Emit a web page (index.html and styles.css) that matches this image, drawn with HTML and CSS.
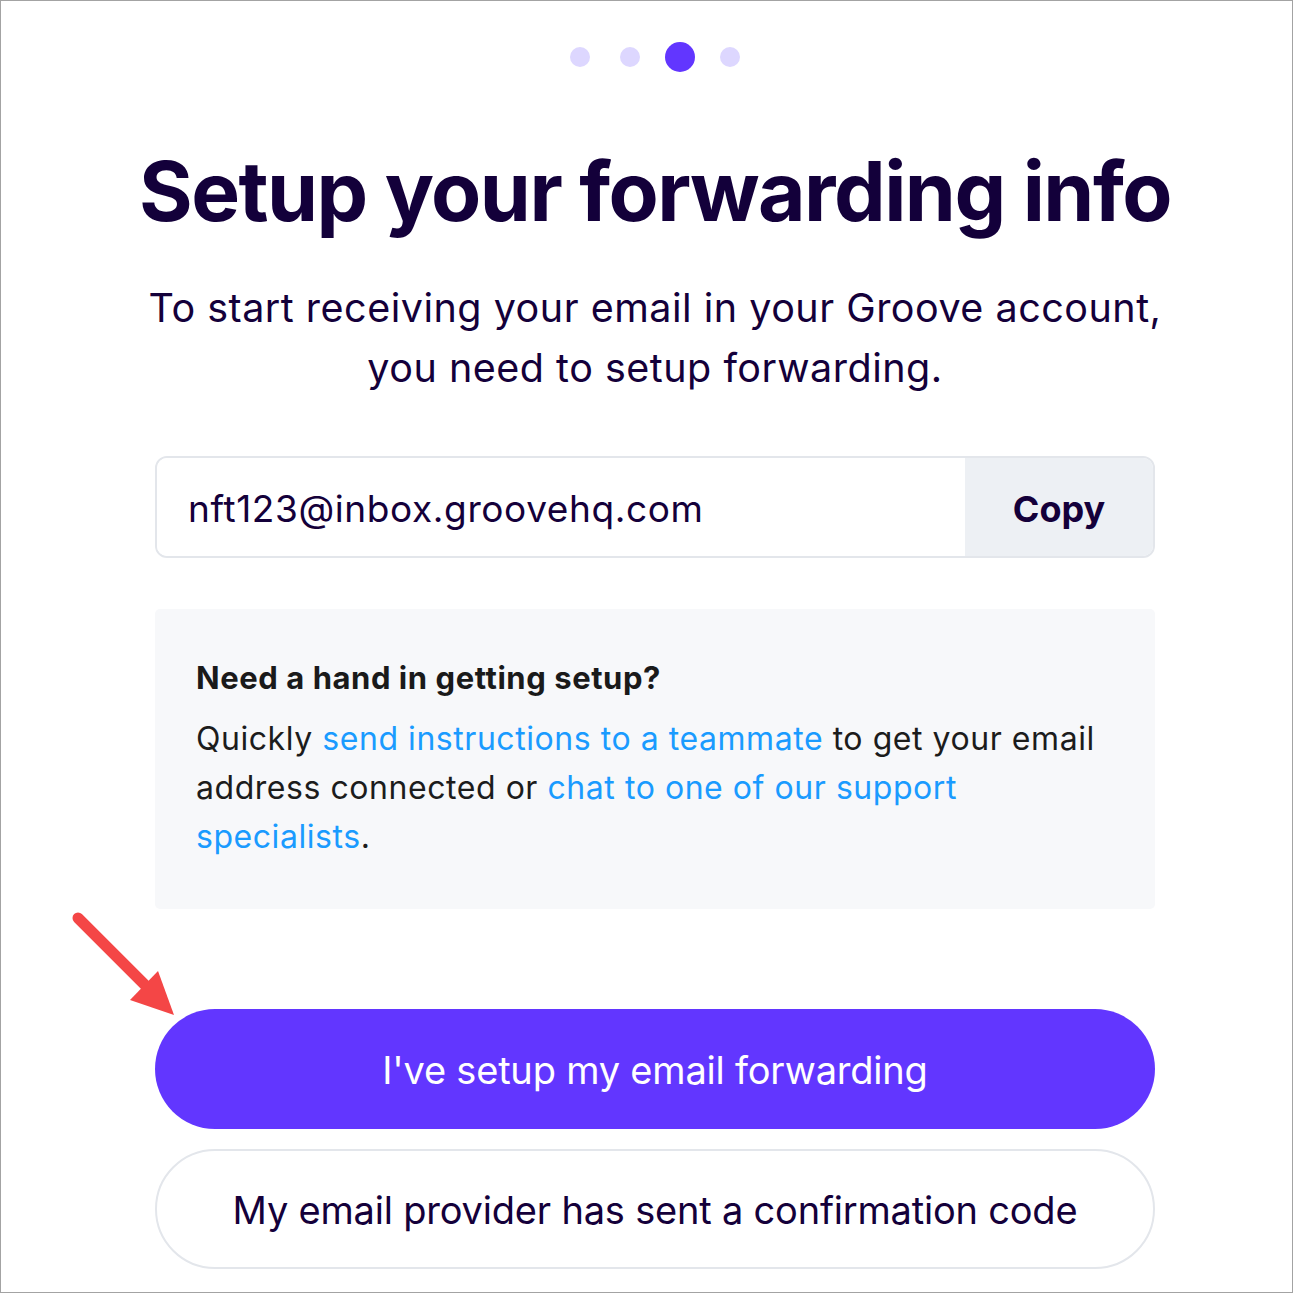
FILE: index.html
```html
<!DOCTYPE html>
<html lang="en">
<head>
<meta charset="utf-8">
<title>Setup your forwarding info</title>
<link rel="stylesheet" href="styles.css">
</head>
<body>
<div class="frame">
  <div class="column">
    <div class="steps">
      <span class="dot"></span>
      <span class="dot"></span>
      <span class="dot active"></span>
      <span class="dot"></span>
    </div>
    <h1 class="title">Setup your forwarding info</h1>
    <p class="subtitle">To start receiving your email in your Groove account,<br>you need to setup forwarding.</p>
    <div class="copy-field">
      <div class="email">nft123@inbox.groovehq.com</div>
      <button class="copy-btn">Copy</button>
    </div>
    <div class="help">
      <div class="help-title">Need a hand in getting setup?</div>
      <p class="help-text">Quickly <a href="#" class="link">send instructions to a teammate</a> to get your email address connected or <a href="#" class="link">chat to one of our support specialists</a>.</p>
    </div>
    <button class="btn-primary">I've setup my email forwarding</button>
    <button class="btn-secondary">My email provider has sent a confirmation code</button>
  </div>
  <svg class="arrow" width="130" height="130" viewBox="0 0 130 130">
    <line x1="18" y1="18" x2="86" y2="86" stroke="#f44646" stroke-width="11" stroke-linecap="round"/>
    <polygon points="70,100 98,71 114,115" fill="#f44646"/>
  </svg>
</div>
</body>
</html>
```
FILE: styles.css
```css
* { box-sizing: border-box; }
html, body { margin: 0; padding: 0; background: #fff; }
body { font-family: Inter, "Noto Sans", sans-serif; color: #14003a; }

.frame {
  position: relative;
  width: 1293px;
  height: 1293px;
  border: 1px solid #a3a3a3;
  padding: 41px 0 0 154px;
  overflow: hidden;
}

.column {
  width: 1000px;
  display: flex;
  flex-direction: column;
  align-items: stretch;
}

.steps {
  display: flex;
  justify-content: center;
  align-items: center;
  gap: 30px;
  height: 30px;
}
.dot {
  width: 20px;
  height: 20px;
  border-radius: 50%;
  background: #ddd7ff;
}
.dot.active {
  width: 30px;
  height: 30px;
  margin: 0 -5px;
  background: #6236ff;
}

.title {
  margin: 70px -60px 0;
  font-size: 82px;
  line-height: 100px;
  font-weight: 700;
  text-align: center;
  letter-spacing: -1.5px;
  color: #13003a;
}

.subtitle {
  margin: 36px -60px 0;
  font-size: 39.5px;
  line-height: 60px;
  text-align: center;
  letter-spacing: 0.5px;
  color: #14003a;
}

.copy-field {
  margin-top: 58px;
  display: flex;
  height: 102px;
  border: 2px solid #e3e6eb;
  border-radius: 12px;
  overflow: hidden;
}
.email {
  flex: 1;
  display: flex;
  align-items: center;
  padding: 2px 0 0 31px;
  font-size: 37px;
  letter-spacing: 0.6px;
  color: #14003a;
  background: #fff;
}
.copy-btn {
  width: 188px;
  border: 0;
  background: #edf0f4;
  font-family: inherit;
  font-size: 36px;
  font-weight: 700;
  color: #14003a;
  padding: 4px 0 0;
}

.help {
  margin-top: 51px;
  height: 300px;
  background: #f7f8fa;
  border-radius: 5px;
  padding: 49px 50px 0 41px;
}
.help-title {
  font-size: 31px;
  line-height: 40px;
  font-weight: 700;
  letter-spacing: 0.55px;
  color: #1a1a1a;
}
.help-text {
  margin: 16px 0 0;
  font-size: 32px;
  line-height: 49px;
  letter-spacing: 0.55px;
  color: #1c1c1c;
}
.link {
  color: #1a9bff;
  text-decoration: none;
}

.btn-primary,
.btn-secondary {
  height: 120px;
  border-radius: 60px;
  font-family: inherit;
  font-size: 38px;
  letter-spacing: -0.2px;
  padding: 2px 0 0;
}
.btn-primary {
  margin-top: 100px;
  border: 0;
  background: #6236ff;
  color: #fff;
}
.btn-secondary {
  margin-top: 20px;
  border: 2px solid #e3e6eb;
  background: #fff;
  color: #14003a;
}

.arrow {
  position: absolute;
  left: 59px;
  top: 899px;
}
```
